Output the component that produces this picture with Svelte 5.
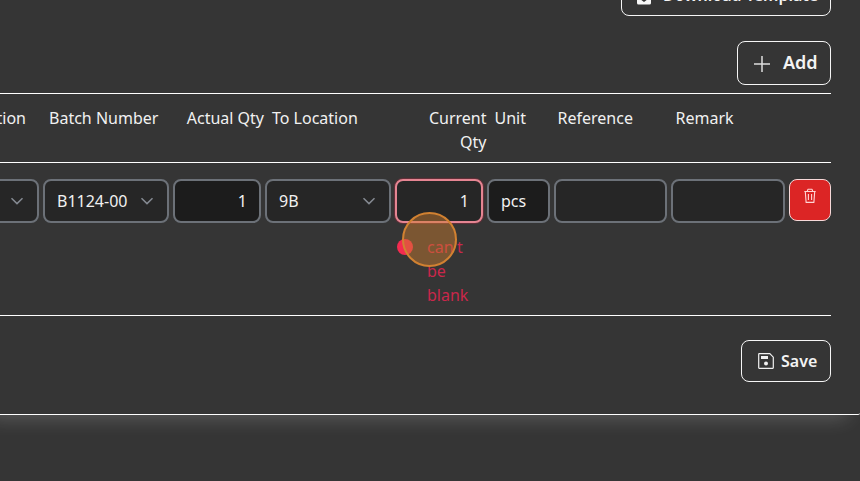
<script>
  const fields = [
    { kind: 'select', value: '', width: 126 },
    { kind: 'select', value: 'B1124-00', width: 126 },
    { kind: 'readonly', value: '1', width: 88, numeric: true },
    { kind: 'select', value: '9B', width: 126 },
    { kind: 'input', value: '1', width: 88, numeric: true, error: "can't be blank" },
    { kind: 'readonly', value: 'pcs', width: 63 },
    { kind: 'input', value: '', width: 113 },
    { kind: 'input', value: '', width: 114 }
  ];
  const heads = [
    { label: 'From Location', width: 126 },
    { label: 'Batch Number', width: 119 },
    { label: 'Actual Qty', width: 88, numeric: true },
    { label: 'To Location', width: 127 },
    { label: 'Current Qty', width: 79.500, numeric: true },
    { label: 'Unit', width: 55 },
    { label: 'Reference', width: 110 },
    { label: 'Remark', width: 155.500 }
  ];
</script>

<main>
  <section class="panel">
    <div class="template-row">
      <button class="btn download">
        <svg width="14" height="20" viewBox="0 0 14 20"><path fill="#f8f8f8" d="M0 5h4v8H3v1l4 3 4-3v-1h-1V5h4v13q0 1.500-1.500 1.500h-11Q0 19.500 0 18z" /></svg>
        <span>Download Template</span>
      </button>
    </div>
    <div class="add-row">
      <button class="btn add">
        <svg width="18" height="18" viewBox="0 0 18 18"><path d="M9 1v16M1 9h16" stroke="#ddd" stroke-width="1.5" fill="none" /></svg>
        <span>Add</span>
      </button>
    </div>
    <div class="table">
      <div class="head">
        {#each heads as h}
          <div class="th" class:numeric={h.numeric} style:width="{h.width}px">{h.label}</div>
        {/each}
      </div>
      <div class="row">
        {#each fields as f}
          <div class="cell" style:width="{f.width}px">
            <div class="field {f.kind}" class:numeric={f.numeric} class:invalid={f.error}>
              <span>{f.value}</span>
              {#if f.kind === 'select'}
                <svg width="14" height="10" viewBox="0 0 14 10"><path d="M1.5 2.2 7 7.6l5.500-5.400" fill="none" stroke="#858a92" stroke-width="1.500" /></svg>
              {/if}
            </div>
            {#if f.error}
              <div class="error"><i></i><span>{f.error}</span></div>
              <div class="pointer"></div>
            {/if}
          </div>
        {/each}
        <button class="remove" aria-label="Remove">
          <svg width="14" height="16" viewBox="0 0 14 16"><path d="M1.300 3.500h11.400M4.300 3.300l.6-2h4.200l.6 2M2.300 3.700l.8 10.700h7.800l.8-10.700M5.400 5.900v6M8.600 5.900v6" fill="none" stroke="#ffd5d5" stroke-width="1.100" stroke-linejoin="round" /></svg>
        </button>
      </div>
    </div>
    <div class="save-row">
      <button class="btn save">
        <svg width="16" height="16" viewBox="0 0 16 16"><path d="M1.200.7h10.600l3.500 3.500v10.600q0 .5-.5.5H1.200q-.5 0-.5-.5V1.200q0-.5.500-.5z" fill="none" stroke="#f0f0f0" stroke-width="1.200" /><path d="M3 3h7v3H3z" fill="#f0f0f0" /><circle cx="8" cy="10.600" r="2" fill="#f0f0f0" /></svg>
        <span>Save</span>
      </button>
    </div>
  </section>
</main>

<style>
  :global(body) { margin: 0; background: #353535; }
  main {
    height: 481px;
    overflow: hidden;
    background: #353535;
    color: #f1f1f1;
    font: 16px/24px "Noto Sans", sans-serif;
  }
  .panel {
    box-sizing: border-box;
    height: 415px;
    padding-right: 29px;
    background: #353535;
    border-bottom: 1px solid #fff;
    border-bottom-right-radius: 2px;
    box-shadow: -12px 3px 20px rgb(255 255 255 / 20%);
  }
  .btn {
    box-sizing: border-box;
    display: flex;
    align-items: center;
    padding: 0;
    border: 1px solid #f5f5f5;
    border-radius: 8px;
    background: transparent;
    color: #f3f3f3;
    font: 600 16px/24px "Noto Sans", sans-serif;
    white-space: nowrap;
  }
  .template-row, .add-row, .save-row { display: flex; justify-content: flex-end; }
  .template-row { height: 16px; align-items: flex-end; }
  .download { flex: none; width: 210px; height: 42px; padding-left: 15px; gap: 12px; }
  .add-row { padding-top: 25px; }
  .add { width: 94px; height: 44px; padding-left: 15px; gap: 12px; font-size: 18px; }
  .add svg { position: relative; top: 1px; }
  .add span { margin-top: -2px; }
  .table {
    box-sizing: border-box;
    margin-top: 8px;
    height: 223px;
    border: solid #fff;
    border-width: 1px 0;
  }
  .head {
    box-sizing: border-box;
    display: flex;
    justify-content: flex-end;
    gap: 8px;
    height: 69px;
    padding-top: 12px;
    border-bottom: 1px solid #fff;
    overflow: hidden;
  }
  .th { flex: none; }
  .th:first-child { width: 126px; text-align: right; box-sizing: border-box; padding-right: 15px; }
  .row { display: flex; justify-content: flex-end; gap: 4px; padding-top: 16px; }
  .cell { flex: none; position: relative; }
  .field {
    box-sizing: border-box;
    display: flex;
    align-items: center;
    justify-content: space-between;
    height: 44px;
    padding: 0 13px 0 12px;
    border: 2px solid #6c7178;
    border-radius: 8px;
    background: #262626;
  }
  .readonly { background: #1c1c1c; }
  .numeric { text-align: right; }
  .field.numeric { justify-content: flex-end; padding-right: 12px; }
  .invalid { border-color: #e58592; box-shadow: 0 0 1px 1px #66303a; }
  .error { display: flex; color: #ca274b; padding: 12px 12px 0 2px; }
  .error i { flex: none; width: 16px; height: 16px; margin: 4px 14px 0 0; border-radius: 50%; background: #f32b50; }
  .pointer {
    position: absolute;
    box-sizing: border-box;
    left: 7px;
    top: 33px;
    width: 55px;
    height: 55px;
    border: 2px solid #d18131;
    border-radius: 50%;
    background: rgb(207 126 47 / 46%);
  }
  .remove {
    display: flex;
    flex: none;
    justify-content: center;
    box-sizing: border-box;
    width: 42px;
    height: 42px;
    padding: 8px 0 0;
    border: 1px solid #f6d9d9;
    border-radius: 8px;
    background: #dc2525;
  }
  .save-row { padding-top: 24px; }
  .save { width: 90px; height: 42px; padding-left: 16px; gap: 7px; }
</style>
